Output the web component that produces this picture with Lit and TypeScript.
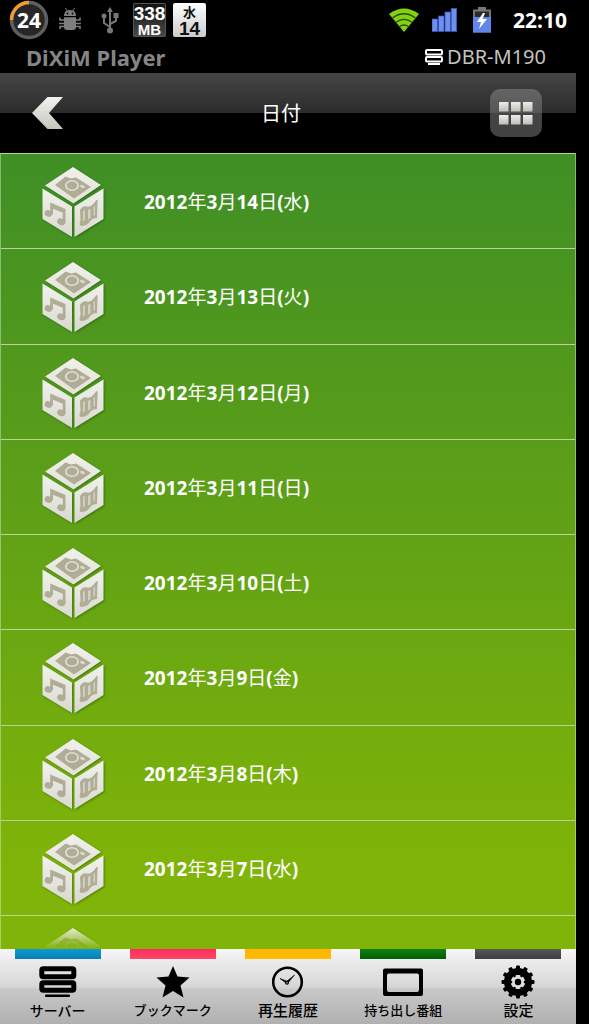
import { LitElement, html, css, svg } from "lit";
import { customElement } from "lit/decorators.js";

const days: [string, string, string, string][] = [
  ["2012", "3", "14", "水"],
  ["2012", "3", "13", "火"],
  ["2012", "3", "12", "月"],
  ["2012", "3", "11", "日"],
  ["2012", "3", "10", "土"],
  ["2012", "3", "9", "金"],
  ["2012", "3", "8", "木"],
  ["2012", "3", "7", "水"],
];

const teeth = Array.from({ length: 12 }, (_, i) => i * 30);

const serverIcon = svg`
  <svg width="38" height="32" viewBox="0 0 38 32" aria-hidden="true">
    <rect x="2.800" y="2.800" width="32" height="8" rx="1.500" fill="none" stroke="currentColor" stroke-width="5"/>
    <rect x="2.800" y="16.800" width="32" height="7.500" rx="1.500" fill="none" stroke="currentColor" stroke-width="5"/>
    <rect x="6" y="28.500" width="25" height="2.500" rx="1" fill="currentColor"/>
  </svg>`;

const starIcon = svg`
  <svg width="34" height="32" viewBox="-2 0 34 32" aria-hidden="true">
    <path d="M15 0 19.500 10.500 31.500 11.500 22.500 19.500 25.500 31.500 15 25 4.500 31.500 7.500 19.500-1.500 11.500 10.500 10.500Z" fill="currentColor"/>
  </svg>`;

const clockIcon = svg`
  <svg width="32" height="32" viewBox="0 0 32 32" aria-hidden="true">
    <circle cx="15.500" cy="16" r="14.300" fill="none" stroke="currentColor" stroke-width="2.600"/>
    <path d="M8 12.500 15 15.200 15 17.800ZM15.500 17.500 14.200 15.800 22.500 9Z" fill="currentColor" stroke="currentColor" stroke-width=".6"/>
    <circle cx="15" cy="16.800" r="2" fill="currentColor"/>
    <circle cx="15" cy="16.800" r=".7" fill="#ddd"/>
  </svg>`;

const screenIcon = svg`
  <svg width="40" height="30" viewBox="0 0 40 30" aria-hidden="true">
    <path fill-rule="evenodd" d="M2 1.500H38Q40 1.500 40 3.500V27Q40 29 38 29H2Q0 29 0 27V3.500Q0 1.500 2 1.500ZM6 6.500Q4 6.500 4 8.500V23Q4 25 6 25H34Q36 25 36 23V8.500Q36 6.500 34 6.500Z" fill="currentColor"/>
  </svg>`;

const gearIcon = svg`
  <svg width="34" height="34" viewBox="0 0 34 34" aria-hidden="true">
    <g fill="currentColor">
      ${teeth.map((a) => svg`<rect x="15" y="0.500" width="4" height="6" rx="1" transform="rotate(${a} 17 17)"/>`)}
    </g>
    <circle cx="17" cy="17" r="10.500" fill="none" stroke="currentColor" stroke-width="7"/>
    <circle cx="17" cy="17" r="7" fill="#dedede"/>
    <g fill="currentColor">
      ${teeth.filter((a) => a % 60 === 30).map((a) => svg`<circle cx="17" cy="10" r="1.300" transform="rotate(${a} 17 17)"/>`)}
    </g>
    <circle cx="17" cy="17" r="3.200" fill="currentColor"/>
  </svg>`;

const tabs = [
  { label: "サーバー", tone: "blue", icon: serverIcon, size: "medium" },
  { label: "ブックマーク", tone: "pink", icon: starIcon, size: "compact" },
  { label: "再生履歴", tone: "amber", icon: clockIcon, size: "" },
  { label: "持ち出し番組", tone: "green", icon: screenIcon, size: "compact" },
  { label: "設定", tone: "gray", icon: gearIcon, size: "" },
];

@customElement("media-cube")
export class MediaCube extends LitElement {
  static styles = css`
    :host { display: block; width: 64px; height: 74px; }
    .cube { display: block; filter: drop-shadow(1px 1px 1px rgba(0, 50, 0, 0.4)); }
  `;

  render() {
    return html`
      <svg class="cube" width="64" height="74" viewBox="0 0 64 74" aria-hidden="true">
        <defs>
          <linearGradient id="top" x1="0" y1="0" x2="0" y2="1">
            <stop offset="0" stop-color="#f1f1ec"/><stop offset="1" stop-color="#e2e2da"/>
          </linearGradient>
          <linearGradient id="side" x1="0" y1="0" x2="0" y2="1">
            <stop offset="0" stop-color="#f2f2ee"/><stop offset="1" stop-color="#d9d8cf"/>
          </linearGradient>
        </defs>
        <path d="M32 2 60 20 32.500 38.500 4 20.500Z" fill="url(#top)"/>
        <path d="M1.500 23.500 31 41.500V72L1.500 54Z" fill="url(#side)"/>
        <path d="M62.500 23.500V54L33.500 72V41.500Z" fill="url(#side)"/>
        <path d="M14 20 24.500 11.500 30 13.500 35 12.500 50 22 33 33.500Z" fill="#b0ad97"/>
        <ellipse cx="31" cy="20.500" rx="7" ry="5.400" fill="#e0e0d6"/>
        <ellipse cx="31" cy="20.500" rx="5.300" ry="4" fill="#b0ad97"/>
        <ellipse cx="41.500" cy="21.500" rx="2.600" ry="1.500" fill="#dcdbd0" transform="rotate(25 41.500 21.500)"/>
        <path d="M9.200 37.500 24.500 44V57H21.800V47.800L12 43.800V49H9.200Z" fill="#b0ad97"/>
        <ellipse cx="7.500" cy="48.500" rx="4" ry="3.200" fill="#b0ad97" transform="rotate(20 7.500 48.500)"/>
        <ellipse cx="20.300" cy="56.800" rx="4.200" ry="3.300" fill="#b0ad97" transform="rotate(20 20.300 56.800)"/>
        <path d="M39 45Q42 40 46 41.500T55.500 35Q57.500 35 56.500 38L56 53Q51 53 48.500 57T39.500 61L38.500 59 39.500 55Z" fill="#b0ad97"/>
        <path d="M42 46 43.800 44.500V55L42 56.500ZM47 45 49.500 43.500V53L47 54.500ZM52.500 42 54 40.500V50L52.500 51Z" fill="#d3d1c3"/>
      </svg>`;
  }
}

@customElement("app-root")
export class AppRoot extends LitElement {
  static styles = css`
    :host {
      display: flex;
      flex-direction: column;
      min-height: 100vh;
      background: #000;
      color: #fff;
      font-family: "Noto Sans", "Noto Sans CJK JP", sans-serif;
    }
    svg { display: block; flex: none; }
    button { border: 0; padding: 0; background: none; color: inherit; font: inherit; cursor: pointer; }

    .status {
      display: flex;
      align-items: center;
      justify-content: space-between;
      height: 40px;
      padding: 0 22px 0 9px;
    }
    .group { display: flex; align-items: center; }
    .left { gap: 7px; }
    .glyphs { width: 60px; display: flex; justify-content: space-between; align-items: center; margin: 0 7px 0 3px; }
    .badge {
      box-sizing: border-box;
      display: flex;
      flex-direction: column;
      align-items: center;
      width: 33px;
      height: 34px;
      padding-top: 2px;
      border-radius: 2px;
      font: 700 19px/17px "Liberation Sans", "Noto Sans CJK JP", sans-serif;
    }
    .memory { background: linear-gradient(#111, #4a4a4a); box-shadow: inset 0 0 0 1px #555; }
    .memory-unit { font-size: 15px; line-height: 15px; }
    .calendar { background: linear-gradient(#fff, #ccc); color: #111; }
    .weekday { font-size: 13px; line-height: 15px; }
    .right { gap: 12px; }
    .clock { font-size: 21px; line-height: 28px; font-weight: 700; margin-left: 6px; }

    .screen { flex: 1; display: flex; flex-direction: column; margin-right: 13px; }
    .title {
      display: flex;
      align-items: center;
      justify-content: space-between;
      height: 33px;
      padding: 0 30px 0 26px;
    }
    .app-name { margin: 0; font-size: 22px; line-height: 32px; font-weight: 700; color: #858585; }
    .device { display: flex; align-items: center; gap: 4px; font-size: 20px; line-height: 32px; color: #c4c4bf; }

    .header {
      display: grid;
      grid-template-columns: 86px 1fr 86px;
      align-items: center;
      height: 80px;
      background: linear-gradient(#464646, #2b2b2b) top / 100% 40px no-repeat #000;
    }
    .back { justify-self: center; padding-left: 10px; }
    .heading {
      margin: 0;
      text-align: center;
      padding-right: 14px;
      font: 400 20px/28px "Noto Sans CJK JP", sans-serif;
    }
    .grid-button {
      justify-self: start;
      display: grid;
      place-items: center;
      width: 52px;
      height: 48px;
      border-radius: 10px;
      background: linear-gradient(#656565, #565656 50%, #454545 50%, #414141);
    }

    .list {
      flex: 1;
      display: grid;
      grid-template-rows: repeat(8, 1fr) 34px;
      margin: 0;
      padding: 0;
      list-style: none;
      background: linear-gradient(#3f8f26, #5b9e18 40%, #80b408 90%);
      border-left: 1px solid rgba(220, 240, 200, 0.45);
      border-right: 1px solid rgba(220, 240, 200, 0.45);
    }
    .row { border-top: 1px solid #b8d696; overflow: hidden; min-height: 0; }
    .row-button {
      display: flex;
      align-items: center;
      gap: 39px;
      width: 100%;
      height: 100%;
      padding: 2px 0 0 40px;
      text-align: left;
      font-size: 19px;
      line-height: 28px;
      font-weight: 700;
    }
    .kanji { font-weight: 400; }
    .peek { padding: 10px 0 0 40px; box-sizing: border-box; }
    .faded { height: 23px; overflow: hidden; -webkit-mask-image: linear-gradient(#000, transparent); mask-image: linear-gradient(#000, transparent); }

    .tabs {
      display: grid;
      grid-template-columns: repeat(5, 1fr);
      height: 75px;
      background: linear-gradient(#f6f6f6, #d6d6d6 50%, #c8c8c8 54%, #b0b0b0);
    }
    .tab { display: flex; flex-direction: column; align-items: center; color: #000; }
    .bar { width: 86px; height: 10px; }
    .blue { background: linear-gradient(#0d9bd0, #087fb6); }
    .pink { background: linear-gradient(#ff2c5e, #ff4768); }
    .amber { background: linear-gradient(#ffb400, #ffbd00); }
    .green { background: linear-gradient(#0d820d, #035c03); }
    .gray { background: linear-gradient(#575757, #3f3f3f); }
    .tab-icon { display: grid; place-items: center; height: 36px; margin-top: 5px; }
    .tab-label { font: 500 15px/20px "Noto Sans CJK JP", sans-serif; white-space: nowrap; }
    .medium { font-size: 14px; }
    .compact { font-size: 13px; }
  `;

  private renderStatus() {
    return html`
      <div class="status">
        <div class="group left">
          <svg width="40" height="40" viewBox="0 0 40 40" role="img" aria-label="24">
            <circle cx="20" cy="20" r="17.500" fill="#272727" stroke="#5f5f5f" stroke-width="3.500"/>
            <path d="M2.500 20A17.500 17.500 0 0 1 20 2.500" fill="none" stroke="#f59b2c" stroke-width="3.500"/>
            <text x="20" y="27.500" text-anchor="middle" fill="#fff" font-size="21" font-weight="700">24</text>
          </svg>
          <div class="glyphs">
            <svg width="22" height="24" viewBox="0 0 22 24" aria-hidden="true">
              <path d="M5 8Q5 2 11 2T17 8ZM5 9.200H17V19Q17 22 14 22H8Q5 22 5 19Z" fill="#7d7d7d"/>
              <path d="M6.500 0 8.500 3.500M15.500 0 13.500 3.500" stroke="#7d7d7d"/>
              <path d="M5 12H1V9.500M5 15.500H0M5 18.500H1V21M17 12H21V9.500M17 15.500H22M17 18.500H21V21" fill="none" stroke="#7d7d7d" stroke-width="1.600"/>
              <circle cx="8.500" cy="5.500" r=".9"/><circle cx="13.500" cy="5.500" r=".9"/>
            </svg>
            <svg width="18" height="27" viewBox="0 0 18 27" aria-hidden="true">
              <path d="M9 23V3M9 20 3 16V9M9 17 15 14V8" fill="none" stroke="#777" stroke-width="2"/>
              <path d="M9 0 12 5H6Z" fill="#777"/>
              <circle cx="9" cy="23.500" r="3" fill="#777"/><circle cx="3" cy="9" r="2.500" fill="#777"/>
              <rect x="12.500" y="6" width="5" height="5" fill="#777"/>
            </svg>
          </div>
          <div class="badge memory"><span>338</span><span class="memory-unit">MB</span></div>
          <div class="badge calendar"><span class="weekday">水</span><span>14</span></div>
        </div>
        <div class="group right">
          <svg width="32" height="26" viewBox="0 0 32 26" aria-hidden="true">
            <path d="M1 7Q16-4 31 7L16 25Z" fill="#83d014"/>
            <path d="M4.500 11Q16 2.500 27.500 11M8 15.200Q16 9.500 24 15.200M11.500 19.500Q16 16.500 20.500 19.500" fill="none" stroke="#244d00" stroke-width="1.300"/>
          </svg>
          <svg width="25" height="24" viewBox="0 0 25 24" aria-hidden="true">
            <g fill="#6c8ff0" stroke="#3a58b8" stroke-width=".7">
              <rect x="0" y="11" width="5.500" height="12.500"/><rect x="6.500" y="8" width="5.500" height="15.500"/>
              <rect x="13" y="4" width="5.500" height="19.500"/><rect x="19.200" y=".5" width="5.500" height="23"/>
            </g>
          </svg>
          <svg width="26" height="26" viewBox="5 0 26 26" aria-hidden="true">
            <rect x="10" y="3.500" width="16" height="21" fill="#2a2a2a" stroke="#777" stroke-width="2"/>
            <rect x="14" y="0" width="8" height="4" fill="#777"/>
            <rect x="9" y="10" width="18" height="15.500" fill="#6186ea"/>
            <path d="M19 6 13 15H17L15 22 23 12H18.500L21 6Z" fill="#fff"/>
          </svg>
          <span class="clock">22:10</span>
        </div>
      </div>`;
  }

  render() {
    return html`
      ${this.renderStatus()}
      <div class="screen">
        <div class="title">
          <h1 class="app-name">DiXiM Player</h1>
          <div class="device">
            <svg width="18" height="16" viewBox="0 0 18 16" aria-hidden="true">
              <g fill="none" stroke="#fff" stroke-width="2">
                <rect x="1" y="1" width="16" height="4.500" rx="1"/><rect x="1" y="8" width="16" height="4.500" rx="1"/>
                <path d="M3 15H15"/>
              </g>
            </svg>
            <span>DBR-M190</span>
          </div>
        </div>
        <header class="header">
          <button class="back" aria-label="戻る">
            <svg width="32" height="34" viewBox="0 0 32 34">
              <defs><linearGradient id="arrow" x1="0" y1="0" x2="0" y2="1"><stop offset="0" stop-color="#f2f2f0"/><stop offset="1" stop-color="#c6c6bd"/></linearGradient></defs>
              <path d="M0 17 15.500 1H31L17 17 31 33H15.500Z" fill="url(#arrow)"/>
            </svg>
          </button>
          <h2 class="heading">日付</h2>
          <button class="grid-button" aria-label="グリッド表示">
            <svg width="34" height="23" viewBox="0 0 34 23">
              <defs><linearGradient id="tile" x1="0" y1="0" x2="0" y2="1"><stop offset="0" stop-color="#ecece9"/><stop offset="1" stop-color="#bfbfb8"/></linearGradient></defs>
              ${[0, 13].map((y) => [0, 12, 24].map((x) => svg`<rect x=${x} y=${y} width="9.500" height="9.500" fill="url(#tile)"/>`))}
            </svg>
          </button>
        </header>
        <ul class="list">
          ${days.map(
            ([y, m, d, w]) => html`
              <li class="row">
                <button class="row-button">
                  <media-cube></media-cube>
                  <span>${y}<span class="kanji">年</span>${m}<span class="kanji">月</span>${d}<span class="kanji">日</span>(<span class="kanji">${w}</span>)</span>
                </button>
              </li>`
          )}
          <li class="row peek"><div class="faded"><media-cube></media-cube></div></li>
        </ul>
        <nav class="tabs">
          ${tabs.map(
            (t) => html`
              <button class="tab">
                <span class="bar ${t.tone}"></span>
                <span class="tab-icon">${t.icon}</span>
                <span class="tab-label ${t.size}">${t.label}</span>
              </button>`
          )}
        </nav>
      </div>`;
  }
}
